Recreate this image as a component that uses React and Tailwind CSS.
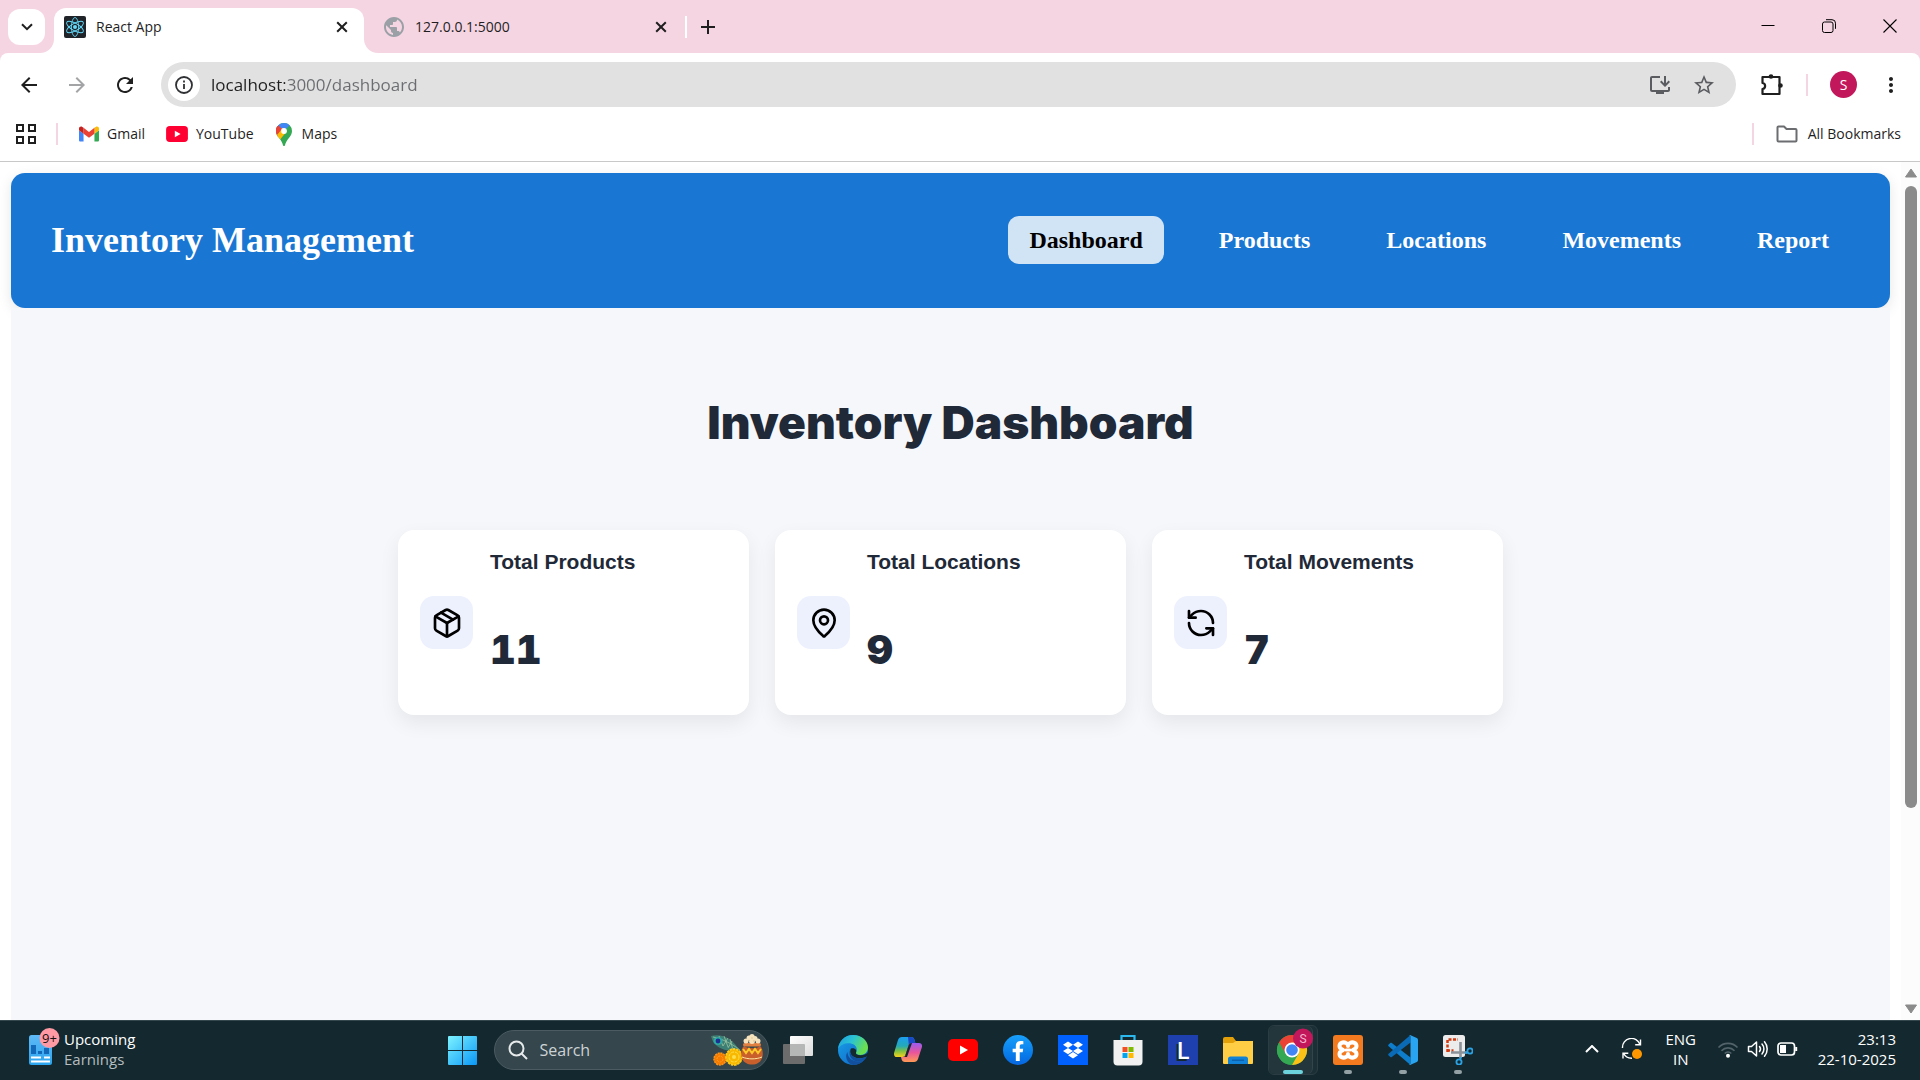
import React from "react";
import { Package, MapPin, RefreshCcw } from "lucide-react";
import { SiDropbox, SiXampp } from "react-icons/si";
import { FaFacebookF } from "react-icons/fa";
import {
  MdArrowBack,
  MdArrowForward,
  MdRefresh,
  MdStarBorder,
  MdMoreVert,
  MdInstallDesktop,
  MdPublic,
} from "react-icons/md";

/* ---------- Browser icons ---------- */

function ReactFavicon() {
  return (
    <svg viewBox="0 0 22 22" className="size-[22px] shrink-0">
      <rect width="22" height="22" rx="2" fill="#202328" />
      <g fill="none" stroke="#61dafb" strokeWidth="0.9">
        <ellipse cx="11" cy="11" rx="9.5" ry="3.6" transform="rotate(90 11 11)" />
        <ellipse cx="11" cy="11" rx="9.5" ry="3.6" transform="rotate(30 11 11)" />
        <ellipse cx="11" cy="11" rx="9.5" ry="3.6" transform="rotate(150 11 11)" />
      </g>
      <circle cx="11" cy="11" r="2" fill="#61dafb" />
    </svg>
  );
}

function CloseGlyph() {
  return (
    <svg viewBox="0 0 12 12" className="size-3" fill="none" stroke="#1f1f1f" strokeWidth="2">
      <path d="M1.2 1.2l9.6 9.6M10.8 1.2l-9.6 9.6" />
    </svg>
  );
}

function InfoIcon() {
  return (
    <svg viewBox="0 0 20 20" className="size-5" fill="none" stroke="#303134" strokeWidth="1.8">
      <circle cx="10" cy="10" r="8" />
      <path d="M10 9v5M10 5.6v1.9" />
    </svg>
  );
}

function GmailIcon() {
  return (
    <svg viewBox="52 42 88 66" className="w-5 h-4">
      <path fill="#4285f4" d="M58 108h14V74L52 59v43c0 3.3 2.7 6 6 6" />
      <path fill="#34a853" d="M120 108h14c3.3 0 6-2.7 6-6V59l-20 15" />
      <path fill="#fbbc04" d="M120 48v26l20-15v-8c0-7.400-8.500-11.700-14.400-7.200" />
      <path fill="#ea4335" d="M72 74V48l24 18 24-18v26L96 92" />
      <path fill="#c5221f" d="M52 51v8l20 15V48l-5.600-4.200C60.500 39.300 52 43.600 52 51" />
    </svg>
  );
}

function YouTubeIcon({ className, color = "#ff0033" }) {
  return (
    <svg viewBox="0 0 30 22" className={className}>
      <rect width="30" height="22" rx="5" fill={color} />
      <path d="M12 6.500v9l8-4.500z" fill="#fff" />
    </svg>
  );
}

function MapsPin() {
  return (
    <svg viewBox="0 0 16 23" className="w-4 h-[23px]">
      <defs>
        <clipPath id="pin">
          <path d="M8 0a8 8 0 0 1 8 8c0 3-1.500 5-3.500 7.500C10.500 18 9.600 20 9 22.300c-.3 1-1.700 1-2 0C6.400 20 5.500 18 3.500 15.500 1.500 13 0 11 0 8a8 8 0 0 1 8-8z" />
        </clipPath>
      </defs>
      <g clipPath="url(#pin)">
        <rect width="16" height="23" fill="#34a853" />
        <path d="M0 0h16L8 8-4 20z" fill="#4285f4" />
        <path d="M0 2l8 6-8 8z" fill="#ea4335" />
        <path d="M0 0l2.500 3L0 6z" fill="#ea4335" />
        <path d="M11 8L3 18-1 13l7-8z" fill="#fbbc04" />
        <path d="M-1 4l3-2 4 4-5 6z" fill="#ea4335" />
      </g>
      <circle cx="8" cy="8" r="2.900" fill="#fff" />
    </svg>
  );
}

function FolderOutline() {
  return (
    <svg viewBox="0 0 22 18" className="w-[22px] h-[18px]" fill="none" stroke="#6b6d70" strokeWidth="2" strokeLinejoin="round">
      <path d="M1.500 2.500a1 1 0 0 1 1-1h5.500l2.500 2.500h9a1 1 0 0 1 1 1v10.500a1 1 0 0 1-1 1h-17a1 1 0 0 1-1-1z" />
    </svg>
  );
}

/* ---------- Browser chrome ---------- */

function TabStrip() {
  return (
    <header className="flex h-[53px] shrink-0 bg-[#f6d5e3] text-[#1f1f1f]">
      <button aria-label="Search tabs" className="mt-[9px] ml-2 flex h-9 w-[37px] items-center justify-center rounded-xl bg-white">
        <svg viewBox="0 0 12 8" className="h-2 w-3" fill="none" stroke="#1f1f1f" strokeWidth="2">
          <path d="M1 1.200l5 5 5-5" />
        </svg>
      </button>
      <div className="relative mt-2 ml-[9px] flex h-[45px] w-[310px] items-start rounded-t-xl bg-white pt-2 pr-[16px] pl-[10px]">
        <svg viewBox="0 0 14 14" className="absolute bottom-0 -left-[14px] size-[14px]" fill="#fff"><path d="M14 0v14H0A14 14 0 0 0 14 0z" /></svg>
        <svg viewBox="0 0 14 14" className="absolute -right-[14px] bottom-0 size-[14px]" fill="#fff"><path d="M0 0v14h14A14 14 0 0 1 0 0z" /></svg>
        <button className="flex flex-1 items-center gap-[10px] text-left text-[14px] leading-5">
          <ReactFavicon />
          React App
        </button>
        <button aria-label="Close tab" className="flex h-[22px] items-center">
          <CloseGlyph />
        </button>
      </div>
      <div className="mt-[9px] flex h-9 w-[322px] items-center pr-[19px] pl-[18px]">
        <button className="flex flex-1 items-center gap-[9px] text-left text-[14px] leading-5">
          <MdPublic className="size-6 text-[#9aa0a6]" />
          127.0.0.1:5000
        </button>
        <button aria-label="Close tab">
          <CloseGlyph />
        </button>
      </div>
      <div className="mt-4 -ml-px h-[22px] w-[2px] bg-white" />
      <button aria-label="New tab" className="ml-[14px] flex h-[53px] items-center">
        <svg viewBox="0 0 14 14" className="size-[14px]" stroke="#1f1f1f" strokeWidth="2">
          <path d="M7 0v14M0 7h14" />
        </svg>
      </button>
      <div className="ml-auto flex h-[52px] items-center">
        <button aria-label="Minimize" className="flex w-[61px] justify-center">
          <svg viewBox="0 0 14 14" className="size-[14px]" stroke="#000" strokeWidth="1">
            <path d="M.5 6.500h13" />
          </svg>
        </button>
        <button aria-label="Restore" className="flex w-[61px] justify-center">
          <svg viewBox="0 0 14 14" className="size-[14px]" fill="none" stroke="#000" strokeWidth="1">
            <rect x=".5" y="3" width="10.500" height="10.500" rx="2" />
            <path d="M4 .7h6a3.500 3.500 0 0 1 3.500 3.500v5.600" />
          </svg>
        </button>
        <button aria-label="Close" className="flex w-[61px] justify-center">
          <svg viewBox="0 0 14 14" className="size-[14px]" stroke="#000" strokeWidth="1.100">
            <path d="M.5.5l13 13M13.500.5l-13 13" />
          </svg>
        </button>
      </div>
    </header>
  );
}

function Toolbar() {
  return (
    <div className="bg-[#f6d5e3]">
      <div className="flex h-[63px] items-center rounded-t-lg bg-white pr-[17px] pl-[17px]">
        <button aria-label="Back" className="w-6"><MdArrowBack className="size-6 text-[#1f1f1f]" /></button>
        <button aria-label="Forward" className="ml-6 w-6"><MdArrowForward className="size-6 text-[#a3a4a6]" /></button>
        <button aria-label="Reload" className="ml-6 w-6"><MdRefresh className="size-6 text-[#1f1f1f]" /></button>
        <div className="ml-6 flex h-[45px] flex-1 items-center rounded-full bg-[#e1e1e1] pr-5 pl-[7px]">
          <button aria-label="View site information" className="flex size-8 items-center justify-center rounded-full bg-white">
            <InfoIcon />
          </button>
          <input
            aria-label="Address"
            defaultValue="localhost:3000/dashboard"
            className="ml-[11px] min-w-0 flex-1 bg-linear-[90deg,#1f1f1f_74px,#6a6c70_74px] bg-clip-text text-[17px] leading-6 text-transparent outline-none"
          />
          <button aria-label="Install app"><MdInstallDesktop className="size-6 text-[#5a5c60]" /></button>
          <button aria-label="Bookmark this page" className="ml-5"><MdStarBorder className="size-6 text-[#5a5c60]" /></button>
        </div>
        <button aria-label="Extensions" className="ml-[24px]">
          <svg viewBox="0 0 24 24" className="size-6" fill="none" stroke="#1f1f1f" strokeWidth="2.200" strokeLinejoin="round">
            <path d="M2.500 4h17v17h-17v-5c3.500-.5 3.500-5.500 0-6z" />
            <circle cx="11" cy="3.500" r="1.200" fill="#1f1f1f" />
            <circle cx="20.500" cy="12.500" r="1.200" fill="#1f1f1f" />
          </svg>
        </button>
        <div className="ml-[22px] h-[22px] w-[2px] bg-[#f6d5e3]" />
        <button aria-label="Profile" className="ml-[22px] flex size-[27px] items-center justify-center rounded-full bg-[#c2185b] text-[14px] text-white">S</button>
        <button aria-label="Menu" className="ml-[22px]"><MdMoreVert className="size-6 text-[#1f1f1f]" /></button>
      </div>
    </div>
  );
}

function BookmarksBar() {
  return (
    <nav aria-label="Bookmarks" className="flex h-[46px] shrink-0 items-start border-b border-[#c8c8c8] bg-white pr-[19px] pl-4 text-[14px] leading-5 text-[#1f1f1f]">
      <div className="flex h-9 w-full items-center">
        <button aria-label="Apps">
          <svg viewBox="0 0 20 20" className="size-5" fill="none" stroke="#1f1f1f" strokeWidth="2">
            <path d="M1 1h6v6H1zM13 1h6v6h-6zM1 13h6v6H1zM13 13h6v6h-6z" />
          </svg>
        </button>
        <div className="ml-5 h-[22px] w-[2px] bg-[#f6d5e3]" />
        <a href="#gmail" className="ml-[21px] flex items-center gap-2"><GmailIcon />Gmail</a>
        <a href="#youtube" className="ml-[21px] flex items-center gap-2"><YouTubeIcon className="h-4 w-[22px]" />YouTube</a>
        <a href="#maps" className="ml-[22px] flex items-center gap-[10px]"><MapsPin />Maps</a>
        <div className="ml-auto h-[22px] w-[2px] bg-[#f6d5e3]" />
        <button className="ml-[22px] flex items-center gap-[10px]"><FolderOutline />All Bookmarks</button>
      </div>
    </nav>
  );
}

/* ---------- Inventory app ---------- */

const links = ["Dashboard", "Products", "Locations", "Movements", "Report"];

const stats = [
  { title: "Total Products", value: 11, Icon: Package },
  { title: "Total Locations", value: 9, Icon: MapPin },
  { title: "Total Movements", value: 7, Icon: RefreshCcw },
];

function NavBar() {
  return (
    <nav className="flex h-[135px] items-center justify-between rounded-[14px] bg-[#1976d2] px-10 pb-[2px] font-['Liberation_Serif',serif] font-bold text-white shadow-[0_4px_14px_rgba(0,0,0,0.1)]">
      <div className="text-[36px] leading-10">Inventory Management</div>
      <ul className="flex gap-[34px] text-[24px] leading-7">
        {links.map((link, i) => (
          <li key={link}>
            <a
              href={"#" + link.toLowerCase()}
              className={
                i === 0
                  ? "block rounded-[11px] bg-[#d1e4f6] px-[21px] py-[10px] text-black"
                  : "block rounded-[11px] px-[21px] py-[10px]"
              }
            >
              {link}
            </a>
          </li>
        ))}
      </ul>
    </nav>
  );
}

function StatCard({ title, value, Icon }) {
  return (
    <article className="flex h-[185px] items-center gap-[17px] rounded-2xl bg-white px-[22px] shadow-[0_8px_20px_rgba(0,0,0,0.07)]">
      <div className="flex size-[53px] items-center justify-center rounded-[14px] bg-[#edf1fe] text-black">
        <Icon size={32} strokeWidth={2} />
      </div>
      <div className="h-[150px]">
        <h2 className="text-[21px] leading-7 font-bold">{title}</h2>
        <p className="mt-[50px] font-['Inter',sans-serif] text-[40px] leading-[48px] font-black tabular-nums">{value}</p>
      </div>
    </article>
  );
}

function ScrollBar() {
  return (
    <div aria-hidden="true" className="flex w-[19px] shrink-0 flex-col items-center bg-[#fcfcfc] py-[6px]">
      <svg viewBox="0 0 12 10" className="h-[10px] w-3"><path d="M6 1l5.500 8H.5z" fill="#8b8b8b" stroke="#8b8b8b" strokeLinejoin="round" /></svg>
      <div className="mt-2 flex w-3 flex-1 flex-col">
        <div className="basis-[76%] rounded-full bg-[#8b8b8b]" />
      </div>
      <svg viewBox="0 0 12 10" className="h-[10px] w-3"><path d="M6 9L.5 1h11z" fill="#8b8b8b" stroke="#8b8b8b" strokeLinejoin="round" /></svg>
    </div>
  );
}

function Page() {
  return (
    <div className="flex min-h-0 flex-1 bg-white">
      <main className="flex min-w-0 flex-1 flex-col pt-[11px] pr-[11px] pl-[11px]">
        <NavBar />
        <section className="flex-1 bg-[#f5f7fb] px-4 pt-[84px] font-['Liberation_Sans',sans-serif] text-[#1f2937]">
          <h1 className="text-center font-['Inter',sans-serif] text-[46px] leading-[60px] font-black">Inventory Dashboard</h1>
          <div className="mx-auto mt-[78px] grid max-w-[1105px] grid-cols-3 gap-[26px]">
            {stats.map((s) => <StatCard key={s.title} {...s} />)}
          </div>
        </section>
      </main>
      <ScrollBar />
    </div>
  );
}

/* ---------- Taskbar ---------- */

function WidgetIcon() {
  return (
    <svg viewBox="0 0 32 38" className="h-[38px] w-8">
      <defs>
        <linearGradient id="wid" x1="0" y1="0" x2="0" y2="1"><stop stopColor="#5fb8f5" /><stop offset="1" stopColor="#2aa5ef" /></linearGradient>
      </defs>
      <rect x="1" y="7" width="23" height="30" rx="2.500" fill="url(#wid)" />
      <path d="M3 17h5v9H3zM10 23h4v3h-4zM16 20h5v6h-5z" fill="#1468b8" />
      <path d="M3 29.500h10M16 29.500h6M3 33.500h19" stroke="#fff" strokeWidth="1.800" />
      <circle cx="21.500" cy="10" r="10" fill="#ff99a4" />
      <text x="21.500" y="14.500" textAnchor="middle" fontSize="13" fill="#111" fontFamily="Open Sans, sans-serif">9+</text>
    </svg>
  );
}

function StartIcon() {
  return (
    <svg viewBox="0 0 29 29" className="size-[29px]">
      <defs>
        <linearGradient id="win" x1="0" y1="0" x2="1" y2="1"><stop stopColor="#7df3ff" /><stop offset="1" stopColor="#0a97f7" /></linearGradient>
      </defs>
      <path fill="url(#win)" d="M1 0h13v14H0V1a1 1 0 0 1 1-1zM15 0h13a1 1 0 0 1 1 1v13H15zM0 15h14v14H1a1 1 0 0 1-1-1zM15 15h14v13a1 1 0 0 1-1 1H15z" />
    </svg>
  );
}

function FestiveArt() {
  return (
    <svg viewBox="0 0 52 32" className="h-8 w-[52px]">
      <path d="M0 2c10-3 22 2 29 15-9 1-19-1-24-6C2 9 1 5 0 2z" fill="#3d7f74" />
      <path d="M2 3c9 2 18 6 27 13M8 2l4 10M13 2l4 11M19 5l3 11M12 12l5-8M17 14l4-7" stroke="#a5cba5" strokeWidth=".7" fill="none" />
      <ellipse cx="7" cy="7" rx="4.500" ry="4" fill="#2ea8a3" />
      <circle cx="7" cy="7" r="2.400" fill="#1c2e8f" />
      <circle cx="9" cy="25" r="6" fill="#f57c00" stroke="#ff9416" strokeWidth="1.500" strokeDasharray="2 .8" />
      <circle cx="9" cy="25" r="3" fill="none" stroke="#ff9d2a" strokeDasharray="2 1" />
      <circle cx="23" cy="23" r="8" fill="#f9b800" stroke="#ffca1a" strokeWidth="1.800" strokeDasharray="2.500 .8" />
      <circle cx="23" cy="23" r="5" fill="none" stroke="#ffdf4d" strokeDasharray="3 1" />
      <circle cx="23" cy="23" r="2" fill="#ffdf4d" />
      <path d="M33 12c4 3 13 3 16 0 4 3 4 14-2 17-3 2-9 2-12 0-6-3-6-14-2-17z" fill="#c9602c" />
      <path d="M32 15l3 4 3-4 3 4 3-4 3 4 3-4" fill="none" stroke="#ffc928" strokeWidth="2" />
      <path d="M31 23c6 2.500 14 2.500 20 0" fill="none" stroke="#ffe6a0" strokeWidth="1" />
      <rect x="32" y="9" width="18" height="3.500" rx="1.700" fill="#e07f40" />
      <g fill="#f6e3bd"><circle cx="35" cy="7" r="2.500" /><circle cx="38" cy="4" r="2.500" /><circle cx="41" cy="2.600" r="2.600" /><circle cx="44" cy="4.500" r="2.500" /><circle cx="47" cy="7" r="2.500" /><circle cx="41" cy="7" r="3" /></g>
      <g fill="#dcbd86"><circle cx="38" cy="6.500" r=".8" /><circle cx="43" cy="7" r=".8" /><circle cx="41" cy="4" r=".7" /></g>
    </svg>
  );
}

function TaskViewIcon() {
  return (
    <svg viewBox="0 0 30 28" className="h-7 w-[30px]">
      <defs><linearGradient id="tv" x1="0" y1="0" x2="1" y2="1"><stop stopColor="#fff" /><stop offset="1" stopColor="#dcdcdc" /></linearGradient></defs>
      <rect y="8" width="22" height="20" rx="1" fill="#6c6c6c" />
      <rect x="7" width="23" height="20" rx="1" fill="url(#tv)" />
      <path d="M7 8h14a1 1 0 0 1 1 1v11H8a1 1 0 0 1-1-1z" fill="#b5b7b7" />
    </svg>
  );
}

function EdgeIcon() {
  return (
    <svg viewBox="0 0 30 30" className="size-[30px]">
      <defs>
        <linearGradient id="eg1" x1="0" y1="0" x2="1" y2=".4"><stop stopColor="#1b9de2" /><stop offset=".5" stopColor="#2bc3d2" /><stop offset="1" stopColor="#6be04e" /></linearGradient>
        <linearGradient id="eg2" x1="0" y1="0" x2="1" y2="1"><stop stopColor="#1ba0e8" /><stop offset="1" stopColor="#0a62c4" /></linearGradient>
      </defs>
      <circle cx="15" cy="15" r="15" fill="url(#eg2)" />
      <path d="M0 14C1 6 7 0 15 0c9 0 15 6 15 12.500 0 4.500-3.500 7.500-7.500 7.500-3 0-5-1-4.500-2.500 1.500-2 1-5.500-1.500-7.500C12 6.500 3 8 0 14z" fill="url(#eg1)" />
      <path d="M9.500 17c0 6 5.500 10 11.500 9.500 3-.2 5-1.500 6-2.500-3 4-7 6-12 6-5-1-9-8-5.500-13z" fill="#124f9d" />
      <path d="M13 13.500c-2 3-.5 8 5.500 9.500 4.500 1 9.500-.5 11.500-2.500V17c-1.500 2.500-4.500 3.200-7.500 3.200-3 0-5-1-4.500-2.500 1-2-.5-5.500-5-4.200z" fill="#14292f" />
      <path d="M13 13.500c-2 3-.5 8 5.500 9.500 3.500.8 7 0 9.500-1.300.5.200.3.900 0 1.300-3 3.500-8 4.500-12 2.500-4-2-6-8-3-12z" fill="#124f9d" />
    </svg>
  );
}

function CopilotIcon() {
  return (
    <svg viewBox="0 0 28 26" className="h-[26px] w-7">
      <defs>
        <linearGradient id="cp1" x1="0" y1="0" x2="0" y2="1"><stop stopColor="#1d9ff0" /><stop offset=".45" stopColor="#23a9b8" /><stop offset=".7" stopColor="#7cc142" /><stop offset="1" stopColor="#f8d21a" /></linearGradient>
        <linearGradient id="cp2" x1="0" y1="0" x2="0" y2="1"><stop stopColor="#9b5cf0" /><stop offset=".5" stopColor="#e8559b" /><stop offset="1" stopColor="#ff9a55" /></linearGradient>
      </defs>
      <path d="M8 0h9c2 0 3 1 3.500 3l.8 3H18c-2 0-3 1-3.600 3l-2.600 8c-.6 2-1.500 3-3.500 3H3c-2.500 0-3.500-2-2.800-4.500L4 3C4.700 1 6 0 8 0z" fill="url(#cp1)" />
      <path d="M14 0h3c2 0 3 1 3.500 3l.8 3H18c-1.500 0-2.500.6-3.200 2z" fill="#1a49c8" />
      <path d="M20 25h-9c-2 0-3-1-3.500-3L7 20h1.300c2 0 3-1 3.500-3l2.600-8C15 7 16 6 18 6h7c2.500 0 3.500 2 2.800 4.500L24 22c-.7 2-2 3-4 3z" fill="url(#cp2)" />
      <path d="M14.400 9C15 7 16 6 18 6l-5 14h-3c1 0 1.500-1.500 1.800-3z" fill="#14292f" />
    </svg>
  );
}

function StoreIcon() {
  return (
    <svg viewBox="0 0 30 32" className="h-8 w-[30px]">
      <path d="M8.500 7V2h13v5" fill="none" stroke="#2bb8ee" strokeWidth="2.200" />
      <path d="M.5 6h29v21.500a4 4 0 0 1-4 4h-21a4 4 0 0 1-4-4z" fill="#f1f1f1" />
      <path d="M9.500 13h5v5h-5z" fill="#f25022" /><path d="M15.500 13h5v5h-5z" fill="#7fba00" />
      <path d="M9.500 19h5v5h-5z" fill="#00a4ef" /><path d="M15.500 19h5v5h-5z" fill="#ffb900" />
    </svg>
  );
}

function ExplorerIcon() {
  return (
    <svg viewBox="0 0 30 27" className="h-[27px] w-[30px]">
      <path d="M0 2a2 2 0 0 1 2-2h8l3 4h15a2 2 0 0 1 2 2v6H0z" fill="#e3a008" />
      <path d="M0 6h10l3-2h17v22a1 1 0 0 1-1 1H1a1 1 0 0 1-1-1z" fill="#ffce45" />
      <path d="M5 27v-5a2.500 2.500 0 0 1 2.500-2.500h15A2.500 2.500 0 0 1 25 22v5z" fill="#1282d6" />
      <path d="M9 23.200h12" stroke="#0b5aa5" strokeWidth="1.200" />
    </svg>
  );
}

function ChromeIcon() {
  return (
    <svg viewBox="0 0 38 38" className="size-[38px]">
      <circle cx="16" cy="22" r="15" fill="#34a853" />
      <path d="M3 14.500A15 15 0 0 1 29 14.500H16z" fill="#ea4335" />
      <path d="M3 14.500L9.500 25.700 16 22l6-7.500L16 7z" fill="#ea4335" />
      <path d="M3 14.500L9.500 25.700 16 28.500 22.500 25.700 16 37A15 15 0 0 1 3 14.500z" fill="#34a853" />
      <path d="M29 14.500A15 15 0 0 1 16 37l6.500-11.300L22 18.500 16 14.500z" fill="#fbc116" />
      <circle cx="16" cy="22" r="7.500" fill="#fff" /><circle cx="16" cy="22" r="5.800" fill="#4285f4" />
      <circle cx="27" cy="10.500" r="10" fill="#c2185b" />
      <text x="27" y="15" textAnchor="middle" fontSize="12" fill="#f3b6cd" fontFamily="Roboto, sans-serif">S</text>
    </svg>
  );
}

function VsCodeIcon() {
  return (
    <svg viewBox="0 0 30 30" className="size-[30px]">
      <path d="M.6 9.600l1.700-1.500c.4-.4 1-.4 1.500 0L22.500 22.500V30L.6 11.200c-.6-.5-.6-1.100 0-1.600z" fill="#0e7dcb" />
      <path d="M.6 20.400l1.700 1.500c.4.400 1 .4 1.500 0L22.500 7.500V0L.6 18.800c-.6.500-.6 1.100 0 1.600z" fill="#0a6ab5" />
      <path d="M22 30c-.8 0-1 0-1.700-.6 1 .6 2.200 0 2.200-1.200V1.800C22.500.6 21.300 0 20.300.6 21 0 21.500 0 22 0l6.800 3c.8.400 1.200 1 1.200 1.900v20.200c0 .9-.4 1.500-1.200 1.900z" fill="#29a4f0" />
    </svg>
  );
}

function SnipIcon() {
  return (
    <svg viewBox="0 0 30 30" className="size-[30px]">
      <rect width="22" height="22" rx="2.500" fill="#ececec" />
      <path d="M4.500 17V4.500H15" fill="none" stroke="#cf3a10" strokeWidth="2.500" strokeDasharray="3 1.500" />
      <path d="M4.500 15.500h6" stroke="#cf3a10" strokeWidth="2.500" strokeDasharray="2.500 1.500" />
      <path d="M17.500 7v16M8 17.500h16" stroke="#8b9299" strokeWidth="2.600" />
      <circle cx="27" cy="16" r="2.600" fill="none" stroke="#2ba2e4" strokeWidth="1.800" />
      <circle cx="16" cy="27" r="2.600" fill="none" stroke="#2ba2e4" strokeWidth="1.800" />
      <path d="M22 18l3-1M18 22l-1 3" stroke="#2ba2e4" strokeWidth="2" />
    </svg>
  );
}

function Cell({ label, children, running }) {
  return (
    <button aria-label={label} className="relative flex h-[58px] w-[55px] items-center justify-center">
      {children}
      {running && <span className="absolute bottom-[5px] h-1 w-2 rounded-full bg-[#93a0a4]" />}
    </button>
  );
}

function Taskbar() {
  return (
    <footer className="grid h-[60px] shrink-0 grid-cols-[1fr_auto_1fr] border-t border-[#34474c] bg-[#14292f] text-white">
      <button className="flex items-center gap-1 pb-2 pl-7 text-left">
        <WidgetIcon />
        <span className="pt-1 text-[15px] leading-5">
          Upcoming
          <br />
          <span className="text-[#b5bec0]">Earnings</span>
        </span>
      </button>

      <div className="flex h-[58px] items-center">
        <Cell label="Start"><StartIcon /></Cell>
        <label className="mr-[2px] ml-1 flex h-10 w-[275px] items-center rounded-full border border-[#4b5b61] bg-[#35464d] pr-[5px] pl-[13px]">
          <svg viewBox="0 0 20 20" className="size-5 shrink-0" fill="none" stroke="#e6eaeb" strokeWidth="2">
            <circle cx="8.500" cy="8.500" r="7" /><path d="M13.500 13.500l5.500 5.500" />
          </svg>
          <input aria-label="Search" placeholder="Search" className="ml-3 min-w-0 flex-1 bg-transparent text-[16px] outline-none placeholder:text-[#cdd3d5]" />
          <FestiveArt />
        </label>
        <Cell label="Task view"><TaskViewIcon /></Cell>
        <Cell label="Edge"><EdgeIcon /></Cell>
        <Cell label="Copilot"><CopilotIcon /></Cell>
        <Cell label="YouTube"><YouTubeIcon className="h-[22px] w-[30px]" color="#ff0000" /></Cell>
        <Cell label="Facebook">
          <span className="flex size-[30px] items-end justify-center overflow-hidden rounded-full bg-linear-to-b from-[#19a0fb] to-[#0866e0]">
            <FaFacebookF className="mb-1 size-5" />
          </span>
        </Cell>
        <Cell label="Dropbox">
          <span className="flex size-[30px] items-center justify-center bg-[#0061fe]"><SiDropbox className="size-5" /></span>
        </Cell>
        <Cell label="Store"><StoreIcon /></Cell>
        <Cell label="L">
          <span className="flex size-[30px] items-center justify-center bg-[#1e40af] font-['Open_Sans',sans-serif] text-[24px] leading-none font-semibold [text-shadow:-2px_2px_0_#14292f]">L</span>
        </Cell>
        <Cell label="File Explorer"><ExplorerIcon /></Cell>
        <button aria-label="Chrome" className="relative mr-[3px] ml-[2px] flex h-[50px] w-[50px] items-start justify-center rounded-md border border-[#2b3d43] bg-[#1b3036]">
          <span className="absolute inset-y-0 left-0 w-11 rounded-md border-r border-[#33454b] bg-[#22363c]" />
          <span className="relative pt-[2px] pl-1"><ChromeIcon /></span>
          <span className="absolute bottom-0 left-[14px] h-1 w-5 rounded-full bg-[#6cd2dc]" />
        </button>
        <Cell label="XAMPP" running>
          <span className="flex size-[30px] items-center justify-center rounded-[3px] bg-[#f47a20]">
            <svg viewBox="0 0 22 20" className="h-5 w-[22px]" fill="none" stroke="#fff" strokeWidth="4" strokeLinecap="round" strokeLinejoin="round">
              <path d="M9 3C6 1.500 2.500 3 2.500 6S5 9 6 10c-1 1-3.500 1-3.500 4S6 18.500 9 17c2-1 2-3 2-3s0 2 2 3c3 1.500 6.500 0 6.500-3S17 11 16 10c1-1 3.500-1 3.500-4S16 1.500 13 3c-2 1-2 3-2 3s0-2-2-3z" />
              <path d="M9 10h4" strokeWidth="3" />
            </svg>
          </span>
        </Cell>
        <Cell label="Visual Studio Code" running><VsCodeIcon /></Cell>
        <Cell label="Snipping Tool" running><SnipIcon /></Cell>
      </div>

      <div className="flex items-center justify-end pr-6 pb-[3px] text-[15px] leading-5">
        <button aria-label="Show hidden icons">
          <svg viewBox="0 0 14 8" className="h-2 w-[14px]" fill="none" stroke="#fff" strokeWidth="2"><path d="M1 7l6-6 6 6" /></svg>
        </button>
        <button aria-label="Updates" className="ml-[22px]">
          <svg viewBox="0 0 22 22" className="size-[22px]" fill="none" stroke="#fff" strokeWidth="1.400">
            <path d="M1.500 10A9 9 0 0 1 19 6.500M19.500 1.500v5.300h-5.300" />
            <path d="M11 20.300a9 9 0 0 1-8.500-5.300M2 20.500v-5.300h5.300" />
            <circle cx="16" cy="16" r="5" fill="#ff9800" stroke="none" />
          </svg>
        </button>
        <button className="ml-[22px] w-[32px] text-center">ENG<br />IN</button>
        <button aria-label="Network, volume and battery" className="ml-[20px] flex items-center gap-2">
          <svg viewBox="0 0 22 18" className="h-[18px] w-[22px]" fill="none" stroke="#52636a" strokeWidth="1.600">
            <path d="M1.500 7.500a13 13 0 0 1 19 0M4.500 10.700a9 9 0 0 1 13 0M7.700 13.500a4.700 4.700 0 0 1 6.600 0" />
            <circle cx="11" cy="15.800" r="2" fill="#fff" stroke="none" />
          </svg>
          <svg viewBox="0 0 22 20" className="h-5 w-[22px]" fill="none" stroke="#fff" strokeWidth="1.500" strokeLinejoin="round" strokeLinecap="round">
            <path d="M1.500 7.500h3L9.500 3v14l-5-4.500h-3z" /><path d="M12.500 7.500a4 4 0 0 1 0 5M15 5a7.500 7.500 0 0 1 0 10M17.500 2.800a11 11 0 0 1 0 14.400" />
          </svg>
          <svg viewBox="0 0 21 14" className="h-[14px] w-[21px]" fill="none" stroke="#fff" strokeWidth="1.700">
            <rect x="1" y="1" width="16.500" height="12" rx="3" /><path d="M3 3h6v8H3z" fill="#fff" stroke="none" /><path d="M19.200 5v4" strokeWidth="2" />
          </svg>
        </button>
        <button className="ml-[20px] text-right">23:13<br />22-10-2025</button>
      </div>
    </footer>
  );
}

export default function App() {
  return (
    <div className="flex h-screen flex-col overflow-hidden font-['Open_Sans',sans-serif]">
      <TabStrip />
      <Toolbar />
      <BookmarksBar />
      <Page />
      <Taskbar />
    </div>
  );
}
